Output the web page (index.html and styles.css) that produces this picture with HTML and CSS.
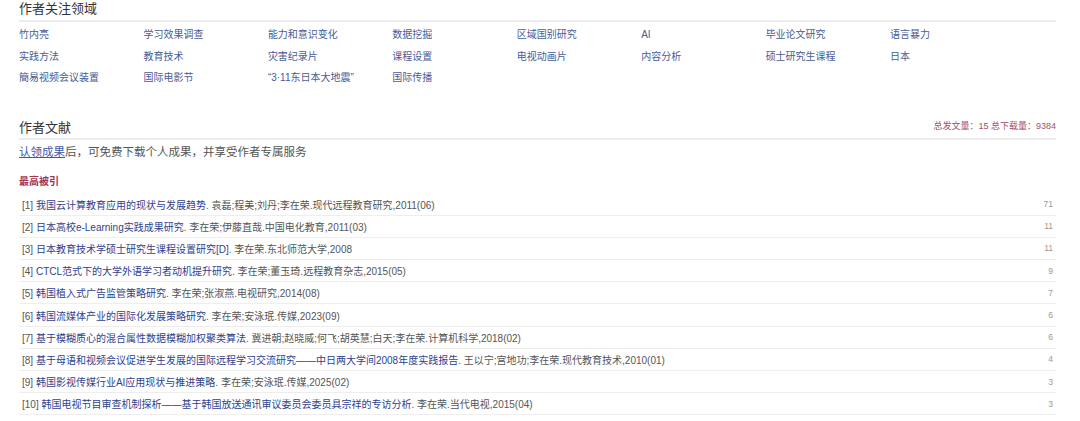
FILE: index.html
```html
<!DOCTYPE html>
<html lang="zh-CN">
<head>
    <meta charset="UTF-8">
    <meta name="viewport" content="width=device-width, initial-scale=1.0">
    <title>作者文献</title>
    <link rel="stylesheet" href="styles.css">
</head>
<body>
    <div class="container">
        <div class="section-head">
            <h2>作者关注领域</h2>
        </div>
        <ul class="topics">
            <li><a href="#">竹内亮</a></li>
            <li><a href="#">学习效果调查</a></li>
            <li><a href="#">能力和意识变化</a></li>
            <li><a href="#">数据挖掘</a></li>
            <li><a href="#">区域国别研究</a></li>
            <li><a href="#">AI</a></li>
            <li><a href="#">毕业论文研究</a></li>
            <li><a href="#">语言暴力</a></li>
            <li><a href="#">实践方法</a></li>
            <li><a href="#">教育技术</a></li>
            <li><a href="#">灾害纪录片</a></li>
            <li><a href="#">课程设置</a></li>
            <li><a href="#">电视动画片</a></li>
            <li><a href="#">内容分析</a></li>
            <li><a href="#">硕士研究生课程</a></li>
            <li><a href="#">日本</a></li>
            <li><a href="#">簡易视频会议装置</a></li>
            <li><a href="#">国际电影节</a></li>
            <li><a href="#">“3·11东日本大地震”</a></li>
            <li><a href="#">国际传播</a></li>
        </ul>

        <div class="section-head docs-head">
            <h2>作者文献</h2>
            <span class="stats">总发文量：15 总下载量：9384</span>
        </div>
        <p class="claim"><a href="#">认领成果</a>后，可免费下载个人成果，并享受作者专属服务</p>
        <h3 class="sub-title">最高被引</h3>
        <ul class="papers">
            <li><span class="ref">[1] <a href="#">我国云计算教育应用的现状与发展趋势</a>. 袁磊;程美;刘丹;李在荣.现代远程教育研究,2011(06)</span><span class="cite">71</span></li>
            <li><span class="ref">[2] <a href="#">日本高校e-Learning实践成果研究</a>. 李在荣;伊藤直哉.中国电化教育,2011(03)</span><span class="cite">11</span></li>
            <li><span class="ref">[3] <a href="#">日本教育技术学硕士研究生课程设置研究[D]</a>. 李在荣.东北师范大学,2008</span><span class="cite">11</span></li>
            <li><span class="ref">[4] <a href="#">CTCL范式下的大学外语学习者动机提升研究</a>. 李在荣;董玉琦.远程教育杂志,2015(05)</span><span class="cite">9</span></li>
            <li><span class="ref">[5] <a href="#">韩国植入式广告监管策略研究</a>. 李在荣;张淑燕.电视研究,2014(08)</span><span class="cite">7</span></li>
            <li><span class="ref">[6] <a href="#">韩国流媒体产业的国际化发展策略研究</a>. 李在荣;安泳珉.传媒,2023(09)</span><span class="cite">6</span></li>
            <li><span class="ref">[7] <a href="#">基于模糊质心的混合属性数据模糊加权聚类算法</a>. 冀进朝;赵晓威;何飞;胡英慧;白天;李在荣.计算机科学,2018(02)</span><span class="cite">6</span></li>
            <li><span class="ref">[8] <a href="#">基于母语和视频会议促进学生发展的国际远程学习交流研究——中日两大学间2008年度实践报告</a>. 王以宁;宫地功;李在荣.现代教育技术,2010(01)</span><span class="cite">4</span></li>
            <li><span class="ref">[9] <a href="#">韩国影视传媒行业AI应用现状与推进策略</a>. 李在荣;安泳珉.传媒,2025(02)</span><span class="cite">3</span></li>
            <li><span class="ref">[10] <a href="#">韩国电视节目审查机制探析——基于韩国放送通讯审议委员会委员具宗祥的专访分析</a>. 李在荣.当代电视,2015(04)</span><span class="cite">3</span></li>
        </ul>
    </div>
</body>
</html>
```

FILE: styles.css
```css
body {
    margin: 0;
    background-color: #fff;
    color: #555;
    font-family: "Liberation Sans", "Noto Sans CJK SC", sans-serif;
}
a {
    text-decoration: none;
}
.container {
    width: 1037px;
    padding-left: 19px;
}
.section-head {
    display: flex;
    justify-content: space-between;
    align-items: flex-end;
    border-bottom: 2px solid #ececec;
    padding-bottom: 3px;
}
.section-head h2 {
    margin: 0;
    font-size: 13px;
    font-weight: normal;
    line-height: 17px;
    color: #333;
}
.topics {
    list-style: none;
    margin: 2px 0 0;
    padding: 0;
    display: grid;
    grid-template-columns: repeat(8, 12%);
}
.topics li {
    font-size: 10px;
    line-height: 21.5px;
    white-space: nowrap;
}
.topics a {
    color: #4a5b95;
}
.docs-head {
    margin-top: 29px;
    padding-bottom: 2px;
}
.stats {
    font-size: 9px;
    line-height: 17px;
    color: #a45068;
    padding-bottom: 1px;
}
.claim {
    margin: 3px 0 0;
    font-size: 11.5px;
    line-height: 18px;
    color: #555;
}
.claim a {
    color: #3d5aa8;
    text-decoration: underline;
}
.sub-title {
    margin: 14px 0 0;
    font-size: 10px;
    line-height: 14px;
    color: #a3344f;
}
.papers {
    list-style: none;
    margin: 5px 0 0;
    padding: 0;
}
.papers li {
    display: flex;
    justify-content: space-between;
    align-items: center;
    height: 21.2px;
    padding: 0 3px;
    border-bottom: 1px solid #eeeeee;
    font-size: 10px;
}
.ref {
    white-space: nowrap;
}
.ref a {
    color: #2e3f8e;
}
.cite {
    font-size: 8.5px;
    color: #999;
}
```
